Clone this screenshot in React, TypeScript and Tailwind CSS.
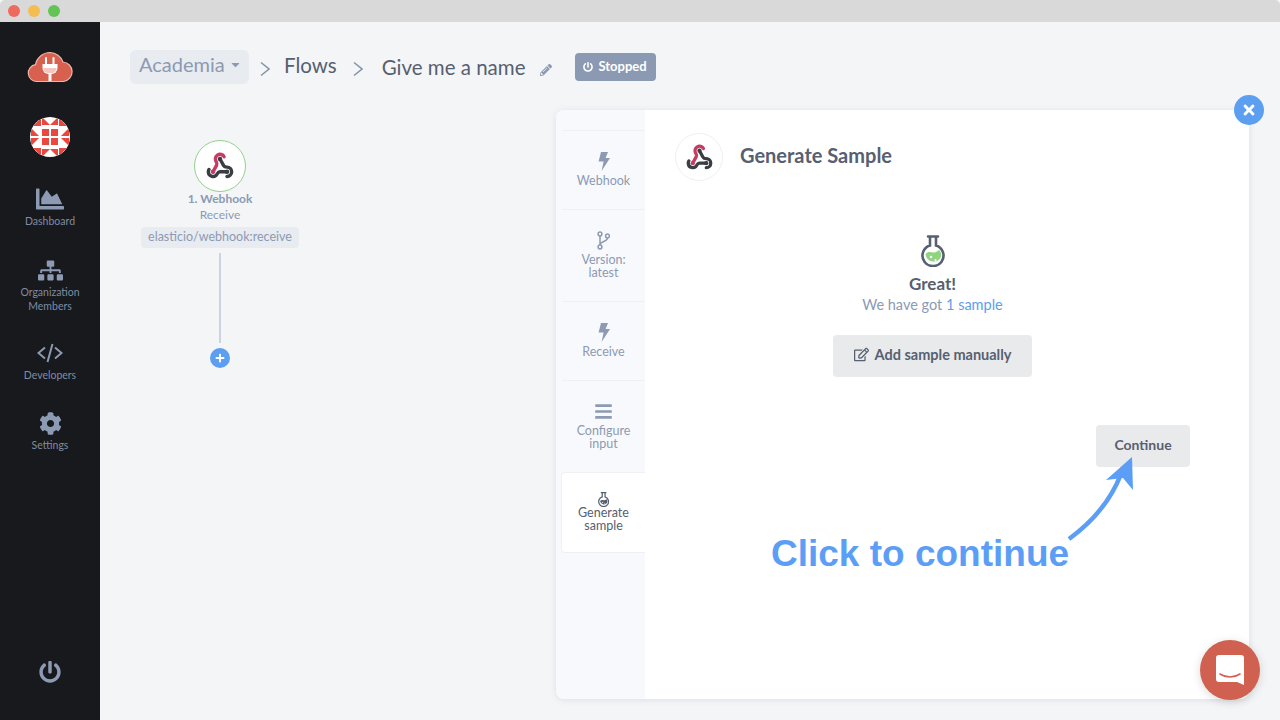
import { FaChartArea, FaSitemap, FaCog, FaPowerOff, FaBars, FaPencilAlt, FaRegEdit, FaCaretDown, FaPlus, FaTimes } from 'react-icons/fa'
import type { ReactNode } from 'react'

const FONT = "font-['Lato','Noto_Sans',sans-serif]"

function WebhookIcon({ size }: { size: number }) {
  return (
    <svg width={size} height={size} viewBox="0 0 24 24" fill="none" strokeWidth="2.9" strokeLinecap="round">
      <path d="M18 16.98h-5.99c-1.1 0-1.95.94-2.48 1.9A4 4 0 0 1 2 17c.01-.7.2-1.4.57-2" stroke="#3a3d42" />
      <path d="m12 6 3.13 5.73C15.66 12.7 16.9 13 18 13a4 4 0 0 1 0 8" stroke="#3a3d42" />
      <path d="m6 17 3.13-5.78c.53-.97.1-2.18-.5-3.1a4 4 0 1 1 6.89-4.06" stroke="#c73a63" />
      <circle cx="6" cy="17" r="1.9" fill="#c73a63" />
      <circle cx="12" cy="6" r="1.9" fill="#3a3d42" />
      <circle cx="18" cy="17" r="1.9" fill="#3a3d42" />
    </svg>
  )
}

function Bolt() {
  return (
    <svg width="12" height="19" viewBox="0 0 12 19" fill="#8c9ab3">
      <path d="M3 0h7L7.600 6H12L3.600 19 5.600 9.500H.6z" />
    </svg>
  )
}

function BranchIcon() {
  return (
    <svg width="13" height="19" viewBox="0 0 13 19" fill="none" stroke="#8c9ab3" strokeWidth="1.500">
      <circle cx="3" cy="3" r="1.900" />
      <circle cx="3" cy="16" r="1.900" />
      <circle cx="10.500" cy="5" r="1.900" />
      <path d="M3 5v9M10.500 7c0 4-7.500 3-7.500 7" />
    </svg>
  )
}

function CodeIcon() {
  return (
    <svg width="26" height="20" viewBox="0 0 26 20" fill="none" stroke="#8c9ab3" strokeWidth="2">
      <path d="M8 4.500 1.500 10 8 15.500M18 4.500 24.500 10 18 15.500M15.500 1l-5 18" />
    </svg>
  )
}

function Flask({ size, liquid, stroke }: { size: number; liquid: string; stroke: string }) {
  return (
    <svg width={size * 0.75} height={size} viewBox="0 0 24 32" fill="none">
      <path d="M7 1.500h10M9 2v8.500a10.500 10.500 0 1 0 6 0V2" stroke={stroke} strokeWidth="2.600" strokeLinecap="round" />
      <path d="M4.500 19c3-3.500 6-1 9-1.500 3-.5 4-3 5-2 2 2 2 5 1 7.500a8.300 8.300 0 0 1-15-4z" fill={liquid} />
      <circle cx="10" cy="22" r="1.300" fill="#fff" />
      <circle cx="14.500" cy="25" r="1.100" fill="#fff" />
    </svg>
  )
}

function CloudLogo() {
  return (
    <svg width="46" height="32" viewBox="0 0 46 32">
      <path d="M10 30.500a8.500 8.500 0 0 1-1.500-16.900A15 15 0 0 1 23 1.500a14 14 0 0 1 13 9.500 9.800 9.800 0 0 1 .5 19.500z" fill="#d8604f" stroke="#efb5aa" strokeWidth="1.200" />
      <path d="M19 7v6M26.500 7v6" stroke="#fff" strokeWidth="2" strokeLinecap="round" />
      <path d="M15.500 13h15v4a6 6 0 0 1-6 6h-3a6 6 0 0 1-6-6z" fill="#fff" />
      <path d="M16.500 17h13v1a5 5 0 0 1-5 4h-3a5 5 0 0 1-5-4z" fill="#f3c7bf" />
      <path d="M23 23v7" stroke="#fff" strokeWidth="3" />
    </svg>
  )
}

function Avatar() {
  const triangles = [
    '3,9 11,1 11,9', '12,8 20,8 12,0', '20,8 28,8 28,0', '29,1 37,9 29,9',
    '1,11 9,19 1,19', '9,21 1,29 1,21', '31,19 39,11 39,19', '31,21 39,21 39,29',
    '3,31 11,31 11,39', '12,32 20,32 12,40', '20,32 28,32 28,40', '29,31 37,31 29,39',
  ]
  return (
    <svg width="40" height="40" viewBox="0 0 40 40" className="rounded-full">
      <rect width="40" height="40" fill="#fff" />
      {triangles.map((t) => (
        <polygon key={t} points={t} fill="#e8483f" />
      ))}
      <rect x="12" y="12" width="7" height="7" fill="#e8483f" />
      <rect x="21" y="12" width="7" height="7" fill="#e8483f" />
      <rect x="12" y="21" width="7" height="7" fill="#e8483f" />
      <rect x="21" y="21" width="7" height="7" fill="#e8483f" />
    </svg>
  )
}

function NavItem({ icon, label, className }: { icon: ReactNode; label: ReactNode; className: string }) {
  return (
    <div className={`flex flex-col items-center text-center text-[10.500px] leading-[14px] text-[#7f8ca3] ${className}`}>
      <div className="flex h-[26px] items-center text-[#8c9ab3]">{icon}</div>
      <div className="mt-[2px]">{label}</div>
    </div>
  )
}

function Sidebar() {
  return (
    <aside className="flex w-[100px] shrink-0 flex-col items-center bg-[#17191c] pt-[29px]">
      <CloudLogo />
      <div className="mt-[34px]">
        <Avatar />
      </div>
      <NavItem className="mt-[29px]" icon={<FaChartArea size={28} />} label="Dashboard" />
      <NavItem className="mt-[29px]" icon={<FaSitemap size={25} />} label={<>Organization<br />Members</>} />
      <NavItem className="mt-[27px]" icon={<CodeIcon />} label="Developers" />
      <NavItem className="mt-[28px]" icon={<FaCog size={23} />} label="Settings" />
      <div className="mt-auto mb-[37px] text-[#8c9ab3]">
        <FaPowerOff size={22} />
      </div>
    </aside>
  )
}

function Chevron() {
  return (
    <svg width="10" height="16" viewBox="0 0 10 16" fill="none" stroke="#8593a9" strokeWidth="1.500" className="mt-[3px]">
      <path d="M1 1.500 9 8l-8 6.500" />
    </svg>
  )
}

function Header() {
  return (
    <header className="flex h-[88px] items-center pl-[30px] pt-[2px]">
      <div className="flex h-[34px] w-[119px] items-center gap-[4px] rounded-[6px] bg-[#e8ebf0] pb-[6px] pl-[9px] text-[20px] text-[#8c9ab3]">
        Academia
        <FaCaretDown size={13} />
      </div>
      <div className="ml-[11px]"><Chevron /></div>
      <div className="ml-[14px] pb-[3px] text-[20.500px] text-[#566070]">Flows</div>
      <div className="ml-[16px]"><Chevron /></div>
      <div className="ml-[19px] text-[20.500px] text-[#566070]">Give me a name</div>
      <FaPencilAlt size={12} className="ml-[14px] mt-[6px] text-[#8c9ab3]" />
      <div className="ml-[23px] flex h-[28px] w-[81px] items-center justify-center gap-[5px] rounded-[4px] bg-[#8b9ab2] text-[13px] font-bold text-white">
        <FaPowerOff size={10} />
        Stopped
      </div>
    </header>
  )
}

function FlowCanvas() {
  return (
    <div className="flex w-[240px] flex-col items-center pt-[30px]">
      <div className="flex h-[52px] w-[52px] items-center justify-center rounded-full border border-[#94d18d] bg-white">
        <WebhookIcon size={28} />
      </div>
      <div className="text-[12px] leading-[14px] font-bold text-[#8c9ab3]">1. Webhook</div>
      <div className="mt-[1px] text-[12px] leading-[16px] text-[#8c9ab3]">Receive</div>
      <div className="mt-[4px] flex h-[21px] w-[158px] items-center justify-center rounded-[4px] bg-[#e8ebf0] text-[12.500px] text-[#8c9ab3]">
        elasticio/webhook:receive
      </div>
      <div className="mt-[5px] h-[90px] w-[2px] bg-[#cdd3e0]" />
      <div className="mt-[5px] flex h-[20px] w-[20px] items-center justify-center rounded-full bg-[#5c9ef0] text-white">
        <FaPlus size={10} />
      </div>
    </div>
  )
}

function Tab({ icon, label, className }: { icon: ReactNode; label: ReactNode; className: string }) {
  return (
    <div className={`flex flex-col items-center justify-start border-b border-[#eef0f4] text-center text-[12.500px] leading-[13px] text-[#8c9ab3] ${className}`}>
      <div className="flex h-[20px] items-center">{icon}</div>
      <div className="mt-[3px]">{label}</div>
    </div>
  )
}

function TabRail() {
  return (
    <div className="flex w-[89px] shrink-0 flex-col bg-[#f8f9fc] pl-[6px] pt-[20px]">
      <div className="border-b border-[#eef0f4]" />
      <Tab className="h-[79px] pt-[20px]" icon={<Bolt />} label="Webhook" />
      <Tab className="h-[92px] pt-[20px]" icon={<BranchIcon />} label={<>Version:<br />latest</>} />
      <Tab className="h-[79px] pt-[20px]" icon={<Bolt />} label="Receive" />
      <Tab className="h-[91px] pt-[20px] border-b-0" icon={<FaBars size={19} className="text-[#8c9ab3]" />} label={<>Configure<br />input</>} />
      <div className="ml-[-1px] flex h-[81px] flex-col items-center rounded-l-[4px] border border-r-0 border-[#eef0f4] bg-white pt-[16px] text-center text-[12.500px] leading-[13px] text-[#566070]">
        <div className="flex h-[20px] items-center">
          <Flask size={15} liquid="#566070" stroke="#566070" />
        </div>
        <div className="mt-[-3px]">Generate<br />sample</div>
      </div>
    </div>
  )
}

function ContinueArrow() {
  return (
    <svg width="72" height="88" viewBox="0 0 72 88" fill="none">
      <path d="M2 83C28 64 44 44 54 18" stroke="#5c9ef5" strokeWidth="4.500" />
      <path d="M65 1l1 33-10-12-17 2z" fill="#5c9ef5" />
    </svg>
  )
}

function SampleContent() {
  return (
    <div className="relative flex-1 bg-white pl-[30px] pr-[59px] pt-[23px]">
      <div className="flex items-center">
        <div className="flex h-[48px] w-[48px] items-center justify-center rounded-full border border-[#eff0f3]">
          <WebhookIcon size={27} />
        </div>
        <h2 className="ml-[17px] mt-[-5px] text-[20px] font-bold text-[#566070]">Generate Sample</h2>
      </div>
      <div className="mt-[54px] flex flex-col items-center">
        <Flask size={32} liquid="#8fd47f" stroke="#566070" />
        <div className="mt-[6px] text-[17px] leading-[22px] font-bold text-[#566070]">Great!</div>
        <div className="text-[14.500px] leading-[20px] text-[#8c9ab3]">
          We have got <span className="text-[#5c9ef0]">1 sample</span>
        </div>
        <button className="mt-[20px] flex h-[42px] w-[199px] items-center justify-center gap-[6px] rounded-[4px] bg-[#e9eaec] pb-[3px] text-[14.500px] font-bold text-[#566070]">
          <FaRegEdit size={15} />
          Add sample manually
        </button>
      </div>
      <div className="mt-[48px] flex justify-end">
        <button className="h-[42px] w-[94px] rounded-[4px] bg-[#e9eaec] pb-[3px] text-[14px] font-bold text-[#566070]">Continue</button>
      </div>
      <div className="absolute left-[126px] top-[421px] font-['Liberation_Sans',sans-serif] text-[37px] leading-[46px] font-bold whitespace-nowrap text-[#5c9ef5]">
        Click to continue
      </div>
      <div className="absolute left-[422px] top-[346px]">
        <ContinueArrow />
      </div>
    </div>
  )
}

export default function App() {
  return (
    <div className={`relative flex h-[720px] w-[1280px] flex-col overflow-hidden bg-[#f4f5f7] ${FONT}`}>
      <div className="flex h-[22px] shrink-0 items-center gap-[8px] rounded-t-[5px] bg-[#d9d9d9] pl-[8px]">
        <span className="h-[12px] w-[12px] rounded-full bg-[#ee6a5f]" />
        <span className="h-[12px] w-[12px] rounded-full bg-[#f5bd4f]" />
        <span className="h-[12px] w-[12px] rounded-full bg-[#61c454]" />
      </div>
      <div className="flex flex-1">
        <Sidebar />
        <main className="flex flex-1 flex-col">
          <Header />
          <div className="flex">
            <FlowCanvas />
            <section className="relative ml-[216px] flex h-[589px] w-[693px] rounded-[8px] bg-white shadow-[0_1px_6px_rgba(120,130,150,0.18)]">
              <div className="flex flex-1 overflow-hidden rounded-[8px]">
                <TabRail />
                <SampleContent />
              </div>
              <div className="absolute right-[-15px] top-[-15px] flex h-[30px] w-[30px] items-center justify-center rounded-full bg-[#5c9ef0] text-white">
                <FaTimes size={16} />
              </div>
            </section>
          </div>
        </main>
      </div>
      <div className="absolute bottom-[20px] right-[20px] flex h-[60px] w-[60px] items-center justify-center rounded-full bg-[#d0604f] shadow-[0_2px_10px_rgba(0,0,0,0.15)]">
        <svg width="28" height="30" viewBox="0 0 28 30">
          <path d="M3 0h22a3 3 0 0 1 3 3v27l-7-3H3a3 3 0 0 1-3-3V3a3 3 0 0 1 3-3z" fill="#fff" />
          <path d="M4 19c6 4 14 4 20 0" fill="none" stroke="#d0604f" strokeWidth="1.600" strokeLinecap="round" />
        </svg>
      </div>
    </div>
  )
}
